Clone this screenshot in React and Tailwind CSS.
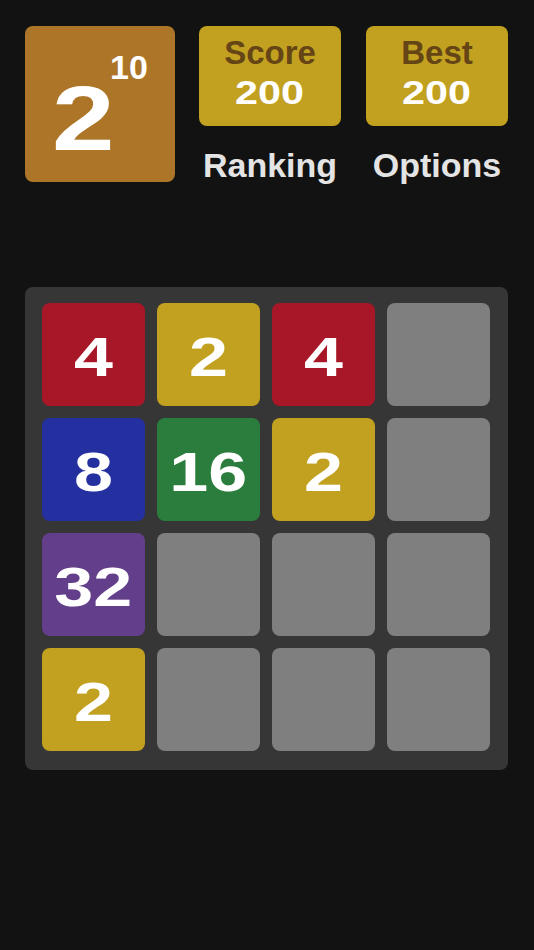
const tileColors = {
  2: 'bg-[#c2a120]',
  4: 'bg-[#a81727]',
  8: 'bg-[#2530a0]',
  16: 'bg-[#2a7d3c]',
  32: 'bg-[#633e8a]',
};

const board = [
  [4, 2, 4, 0],
  [8, 16, 2, 0],
  [32, 0, 0, 0],
  [2, 0, 0, 0],
];

function Tile({ value }) {
  if (!value) return <div className="w-[103px] h-[103px] rounded-[8px] bg-[#7f7f7f]" />;
  return (
    <div className={`w-[103px] h-[103px] rounded-[8px] flex items-center justify-center text-white font-bold text-[56px] leading-none pt-[4px] ${tileColors[value]}`}>
      <span className="scale-x-125 inline-block">{value}</span>
    </div>
  );
}

export default function App() {
  return (
    <div className="min-h-[950px] bg-[#121212] pt-[26px] px-[25px]" style={{ fontFamily: '"Liberation Sans", Arial, sans-serif' }}>
      <div className="flex">
        <div className="w-[150px] h-[156px] rounded-[8px] bg-[#ad7527] relative text-white font-bold">
          <span className="absolute left-[27px] top-[48px] text-[90px] leading-none scale-x-125 inline-block origin-left">2</span>
          <span className="absolute left-[85px] top-[24px] text-[34px] leading-none inline-block">10</span>
        </div>
        <div className="flex-1 ml-[24px] flex flex-col">
          <div className="flex gap-[25px]">
            {['Score', 'Best'].map(label => (
              <div key={label} className="w-[142px] h-[100px] rounded-[8px] bg-[#c2a120] flex flex-col items-center pt-[8px] font-bold">
                <span className="text-[#654416] text-[33px] leading-[38px]">{label}</span>
                <span className="text-white text-[33px] leading-[42px] scale-x-125 inline-block">200</span>
              </div>
            ))}
          </div>
          <div className="flex gap-[25px] mt-[22px]">
            <span className="w-[142px] text-center text-[#e4e4e4] text-[34px] font-bold leading-none">Ranking</span>
            <span className="w-[142px] text-center text-[#e4e4e4] text-[34px] font-bold leading-none">Options</span>
          </div>
        </div>
      </div>

      <div className="mt-[105px] w-[483px] bg-[#363636] rounded-[8px] pt-[16px] pb-[19px] pl-[17px] pr-[18px] grid grid-cols-4 gap-[12px]">
        {board.flat().map((v, i) => <Tile key={i} value={v} />)}
      </div>
    </div>
  );
}
